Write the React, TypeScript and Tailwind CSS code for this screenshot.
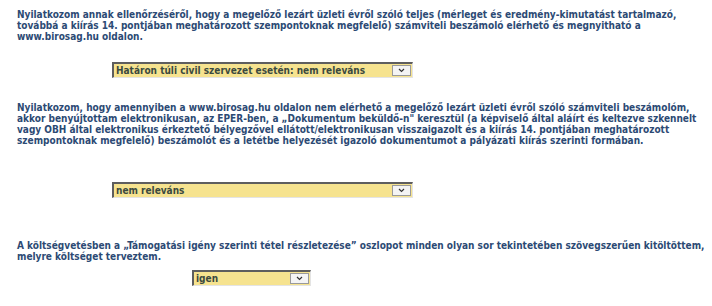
type SelectProps = { label: string; className: string };

// Old-style inset select box with a yellow fill
function FakeSelect({ label, className }: SelectProps) {
  return (
    <div
      className={`flex h-[16px] border-t-2 border-l-2 border-b border-r border-t-[#5e5e5e] border-l-[#5e5e5e] border-b-[#e4e4e4] border-r-[#e4e4e4] bg-[#f6e38f] ${className}`}
    >
      <span className="flex-1 truncate pl-[2px] leading-[13px] text-[#3b4a40]">{label}</span>
      <span className="my-[1px] mr-[1px] flex w-[19px] items-center justify-center border border-[#9a9a9a] bg-[#f4f4f4]">
        <svg width="7" height="5" viewBox="0 0 7 5">
          <path d="M1 1 L3.5 3.5 L6 1" fill="none" stroke="#333" strokeWidth="1.2" />
        </svg>
      </span>
    </div>
  );
}

function Para({ lines, className }: { lines: string[]; className: string }) {
  return (
    <p className={`pl-[17px] whitespace-nowrap ${className}`}>
      {lines.map((l) => (
        <span key={l} className="block">
          {l}
        </span>
      ))}
    </p>
  );
}

export default function App() {
  return (
    <div className="h-[306px] w-[712px] overflow-hidden bg-white font-['DejaVu_Sans_Condensed','DejaVu_Sans',sans-serif] text-[10px] leading-[11px] font-bold text-[#2c4a74]">
      <Para
        className="pt-[9px]"
        lines={[
          'Nyilatkozom annak ellenőrzéséről, hogy a megelőző lezárt üzleti évről szóló teljes (mérleget és eredmény-kimutatást tartalmazó,',
          'továbbá a kiírás 14. pontjában meghatározott szempontoknak megfelelő) számviteli beszámoló elérhető és megnyitható a',
          'www.birosag.hu oldalon.',
        ]}
      />
      <FakeSelect className="ml-[112px] mt-[20px] w-[301px]" label="Határon túli civil szervezet esetén: nem releváns" />

      <Para
        className="mt-[24px]"
        lines={[
          'Nyilatkozom, hogy amennyiben a www.birosag.hu oldalon nem elérhető a megelőző lezárt üzleti évről szóló számviteli beszámolóm,',
          'akkor benyújtottam elektronikusan, az EPER-ben, a „Dokumentum beküldő-n" keresztül (a képviselő által aláírt és keltezve szkennelt',
          'vagy OBH által elektronikus érkeztető bélyegzővel ellátott/elektronikusan visszaigazolt és a kiírás 14. pontjában meghatározott',
          'szempontoknak megfelelő) beszámolót és a letétbe helyezését igazoló dokumentumot a pályázati kiírás szerinti formában.',
        ]}
      />
      <FakeSelect className="ml-[112px] mt-[36px] w-[301px]" label="nem releváns" />

      <Para
        className="mt-[42px]"
        lines={[
          'A költségvetésben a „Támogatási igény szerinti tétel részletezése” oszlopot minden olyan sor tekintetében szövegszerűen kitöltöttem,',
          'melyre költséget terveztem.',
        ]}
      />
      <FakeSelect className="ml-[192px] mt-[8px] w-[119px]" label="igen" />
    </div>
  );
}
